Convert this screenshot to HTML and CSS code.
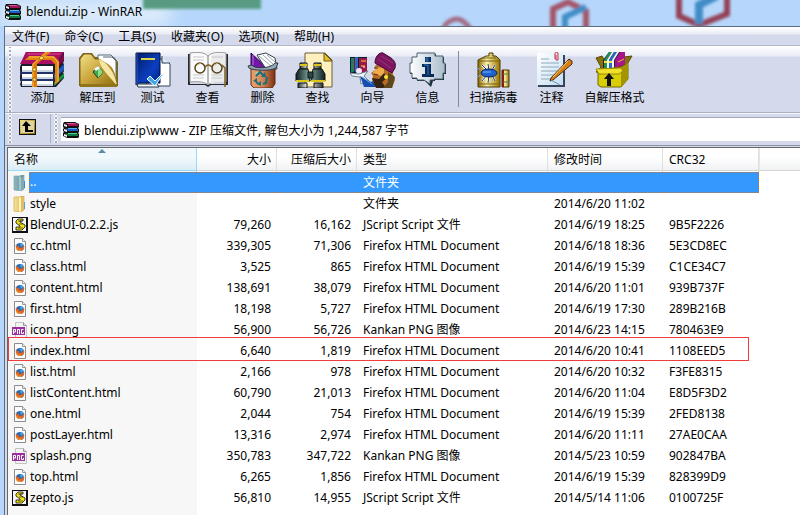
FILE: index.html
```html
<!DOCTYPE html>
<html lang="zh-CN">
<head>
<meta charset="utf-8">
<title>blendui.zip - WinRAR</title>
<link rel="stylesheet" href="styles.css">
</head>
<body>
<svg class="defs" aria-hidden="true">
  <defs>
    <linearGradient id="gold" x1="0" y1="0" x2="1" y2="1"><stop offset="0" stop-color="#f3e08a"/><stop offset=".5" stop-color="#c9a53a"/><stop offset="1" stop-color="#8a6a10"/></linearGradient>
    <linearGradient id="barrel"><stop offset="0" stop-color="#8a6400"/><stop offset=".4" stop-color="#fff3a8"/><stop offset="1" stop-color="#9a7200"/></linearGradient>
    <linearGradient id="navy" x1="0" y1="0" x2="1" y2="1"><stop offset="0" stop-color="#001a66"/><stop offset=".6" stop-color="#0b3fc0"/><stop offset="1" stop-color="#001f80"/></linearGradient>
    <linearGradient id="bin"><stop offset="0" stop-color="#e8a06c"/><stop offset=".45" stop-color="#d98a5c"/><stop offset="1" stop-color="#7c3010"/></linearGradient>
    <linearGradient id="tube"><stop offset="0" stop-color="#101c1c"/><stop offset=".45" stop-color="#7fa3a0"/><stop offset="1" stop-color="#122"/></linearGradient>
    <linearGradient id="steel"><stop offset="0" stop-color="#333"/><stop offset=".4" stop-color="#fff"/><stop offset="1" stop-color="#333"/></linearGradient>
    <linearGradient id="bubble"><stop offset="0" stop-color="#fff"/><stop offset="1" stop-color="#a9bccb"/></linearGradient>
    <linearGradient id="sheet" x1="0" y1="0" x2="1" y2="1"><stop offset="0" stop-color="#fff"/><stop offset="1" stop-color="#c4def5"/></linearGradient>
    <linearGradient id="folder"><stop offset="0" stop-color="#f7e396"/><stop offset="1" stop-color="#dcb350"/></linearGradient>
    <linearGradient id="folderSel"><stop offset="0" stop-color="#8fb5bd"/><stop offset="1" stop-color="#5f93a6"/></linearGradient>
  </defs>
  <symbol id="rar" viewBox="0 0 16 16">
    <path d="M1 0h11l4 2v3l-1 1 1 1v3l-1 1 1 1v3l-1 1H4l-4-2v-3l1-1-1-1V7l1-1-1-1V2z" fill="#111"/>
    <path d="M2 1h9l4 1H5z" fill="#d85a9a"/><path d="M5 2h10v2H5z" fill="#a0145a"/><path d="M1 2l3 1v2L1 4z" fill="#eee"/>
    <path d="M2 6l3 1h10v2H5z" fill="#1d5bc4"/><path d="M5 6h9v1H5z" fill="#59b4ee"/><path d="M1 7l3 1v2L1 9z" fill="#eee"/>
    <path d="M2 11l3 1h10v2H5z" fill="#0b7a43"/><path d="M5 11h9v1H5z" fill="#4fd08c"/><path d="M1 12l3 1v2l-3-1z" fill="#eee"/>
  </symbol>
  <symbol id="dir" viewBox="0 0 16 16">
    <path d="M2 1h6l1-1h3v14l-3 2-7-1z" fill="url(#folder)" stroke="#cfa64a" stroke-width=".7"/><path d="M7 1l2 1v14l-2-1z" fill="#fff3bd"/><path d="M12 6h1v7h-1z" fill="#49a6e8"/><path d="M9 3l3-2v13l-3 2z" fill="#e3be60"/>
  </symbol>
  <symbol id="up" viewBox="0 0 16 16">
    <path d="M2 1h6l1-1h3v14l-3 2-7-1z" fill="url(#folderSel)" stroke="#7ba6b3" stroke-width=".7"/><path d="M7 1l2 1v14l-2-1z" fill="#a5c6c6"/><path d="M12 6h1v7h-1z" fill="#2f8de0"/><path d="M9 3l3-2v13l-3 2z" fill="#82aab2"/>
  </symbol>
  <symbol id="js" viewBox="0 0 16 16">
    <path d="M0 0h16v16H0z" fill="#111"/><path d="M1 1h13v13H1z" fill="#f5f5f5"/>
    <path d="M11 4V2H6L4 4v2l4 3v1H4v3h6l3-3V8L8 5V4z" fill="#f2e21a" stroke="#111" stroke-width=".8"/><path d="M6 4h4M7 7h4M6 11h5" stroke="#111" stroke-width=".6" fill="none"/>
  </symbol>
  <symbol id="html" viewBox="0 0 16 16">
    <path d="M2.500.5h8l3 3v12h-11z" fill="#fdfdfd" stroke="#8c8c8c"/><path d="M10.500.5v3h3" fill="#eee" stroke="#999"/>
    <circle cx="8" cy="9" r="4" fill="#2868b8"/><path d="M4 6c-1 4 1 7 4 7 3 0 5-3 4-6-1 2-2 3-4 3-1 0-2-1-1-2H5z" fill="#e8641b"/><path d="M8 6l2-1 1 2-2 2z" fill="#3fa9e8"/><path d="M4 10c1 2 3 3 5 2" stroke="#f9a832" fill="none"/>
  </symbol>
  <symbol id="png" viewBox="0 0 16 16">
    <path d="M3.500.5h8l3 3v12h-11z" fill="#f3f3f3" stroke="#c2c2c2"/><path d="M11.500.5v3h3" fill="#ddd" stroke="#999"/>
    <path d="M0 5h13v8H0z" fill="#9b2f9e"/><path d="M1.500 12V7.500h2V10h-2M5.500 12V7.500h2V12M11.500 7.500h-2v4h2V10" stroke="#fff" fill="none"/>
  </symbol>
</svg>

<div class="window">
  <header class="titlebar">
    <svg class="glass" width="800" height="26" aria-hidden="true">
      <defs><filter id="soft" x="-20%" y="-50%" width="140%" height="200%"><feGaussianBlur stdDeviation="1.500"/></filter><filter id="glow"><feGaussianBlur stdDeviation="8"/></filter></defs>
      <path d="M0 0h170v26H0z" fill="#dcebfa" filter="url(#glow)"/>
      <g filter="url(#soft)" fill="none">
        <path d="M143-5h118V9H143z" fill="#569b82"/>
        <path d="M443 30c2-8 10-11 14-11s10 4 14 11" stroke="#a26a83" stroke-width="5"/>
        <path d="M553 30V9l15-7 18 9v18" stroke="#a35468" stroke-width="6"/><path d="M565 30V17l21-10" stroke="#3f8dc6" stroke-width="6"/>
        <path d="M679-2v18l20 9 28-11V-4" stroke="#923f54" stroke-width="6"/><path d="M699 24V5l18-9" stroke="#3f8dc6" stroke-width="8"/>
      </g>
    </svg>
    <svg class="icon16"><use href="#rar"/></svg>
    <h1>blendui.zip - WinRAR</h1>
  </header>

  <div class="frame">
    <nav class="menu">
      <button>文件(F)</button><button>命令(C)</button><button>工具(S)</button><button>收藏夹(O)</button><button>选项(N)</button><button>帮助(H)</button>
    </nav>

    <div class="toolbar" role="toolbar">
      <span class="grip"></span>
      <button class="tool"><svg viewBox="0 0 47 36">
        <path d="M7 0h38v9l-1 2 1 1v7l-1 2 1 1v4l-8 9H2l-1-3 1-2-1-2v-5l1-2-1-2v-4H1z" fill="#1c1c2c"/>
        <path d="M7 0h38l-8 12H1z" fill="#a80f62"/><path d="M9 1h33l-1 2H8z" fill="#c22d77"/><path d="M37 13l8-11v6l-8 10z" fill="#8a064b"/>
        <path d="M3 14h31v5H3z" fill="#fff"/><path d="M3 18h31v2H3z" fill="#c9d4e2"/><path d="M35 22l10-10v6l-10 9z" fill="#1d5cc4"/><path d="M3 22h31v5H3z" fill="#fff"/><path d="M3 25h31v2H3z" fill="#c9d4e2"/><path d="M35 30l10-9v4l-10 9z" fill="#149043"/><path d="M3 29h31v5H3z" fill="#fff"/><path d="M3 32h31v2H3z" fill="#c9d4e2"/>
        <path d="M1 20h34v2H1zM1 27h34v2H1z" fill="#22336a"/>
        <path d="M26 0h6L18 12v23h-5V12z" fill="#dc7c0c"/><path d="M28 0L14 12v23" fill="none" stroke="#ffb94a"/>
        <path d="M10 4h25l5 5v20l-4 4V12l-4-4H6z" fill="#e0820e"/><path d="M10 5h24l5 5v20" fill="none" stroke="#ffb94a"/>
        <path d="M20 6l3-2 2 2-3 2zM14 16h3v3h-3zM14 26h3v3h-3z" fill="#ffec70" stroke="#7a4600" stroke-width=".6"/>
      </svg><span>添加</span></button>
      <button class="tool"><svg viewBox="0 0 47 36">
        <path d="M5 6l4-5h9l3 4h19l4 5v24H5z" fill="#806819"/><path d="M24 3h13l4 4v24H24z" fill="#fff" stroke="#54697c"/><path d="M29 5h9l4 4v17" fill="#fff" stroke="#54697c"/>
        <path d="M6 7l4-5h7l4 5h4l10 7 8 20H6z" fill="url(#gold)" stroke="#7a6212"/><path d="M25 7c0 9 9 17 18 27-1-11-3-18-9-22z" fill="#a9851f"/><path d="M25 7c9 4 16 14 18 27-8-11-18-18-18-27z" fill="#f4e6a2"/>
        <path d="M6 32h37v3H6z" fill="#91751a"/><path d="M24 14l5 6-5 6-5-6z" fill="#45a64f" stroke="#153e20"/><path d="M24 14v12l5-6z" fill="#86df83"/><path d="M20 17l4-3 2 2-4 3z" fill="#fff"/>
      </svg><span>解压到</span></button>
      <button class="tool"><svg viewBox="0 0 47 36">
        <path d="M24 7h12l5 5v22H17z" fill="#fff" stroke="#344456"/><path d="M33 4v7h8" fill="#dceafa" stroke="#344456"/><path d="M32 8l4 4" stroke="#67869d"/>
        <path d="M7 1h24v30H10l-3 2z" fill="url(#navy)" stroke="#000d36"/><path d="M8 1v32" stroke="#2b61ca"/><path d="M12 7h14" stroke="#d8d646" stroke-width="2"/>
        <path d="M8 32h20l2 3H9z" fill="#f5f8ff" stroke="#234"/><path d="M18 27l8 7 11-16-11 11-5-5z" fill="#3ca8eb" stroke="#fff"/>
      </svg><span>测试</span></button>
      <button class="tool"><svg viewBox="0 0 47 36">
        <path d="M4 2h2v30h36V2h2v31H27l-3 2-3-2H4z" fill="#27292c"/><path d="M6 1c8-1 14-1 18 3 4-4 10-4 18-3v29c-9-1-15 0-18 3-3-3-9-4-18-3z" fill="#fafafa" stroke="#979797"/>
        <path d="M24 4v28" stroke="#777"/><path d="M27 4c5-3 9-2 14-2v28c-6 0-11 0-14 2z" fill="#ebebeb"/><path d="M9 5h11M9 8h11M9 23h11M9 26h11M28 5h11M28 23h10M28 26h10" stroke="#c5c9cb"/>
        <g fill="none" stroke="#55431b"><circle cx="16" cy="16" r="5" stroke-width="1.500"/><circle cx="33" cy="16" r="5" stroke-width="1.500"/></g><path d="M21 15q3-4 7 0M38 13l3 3v19" fill="none" stroke="#7d6020" stroke-width="1.500"/><path d="M13 13l4-2M30 13l4-2" stroke="#cfb76a"/>
      </svg><span>查看</span></button>
      <button class="tool"><svg viewBox="0 0 47 36">
        <path d="M12 1v15h16z" fill="#7117a6" stroke="#260047"/><path d="M14 3v10" stroke="#c56cf1"/><path d="M18 3l9-2 9 5 2 11H27z" fill="#fff" stroke="#39414a"/><path d="M20 4l12 10M24 3l11 10M28 3l8 7" stroke="#9aa3ab"/>
        <path d="M12 16h24v16l-3 4H15l-3-3z" fill="url(#bin)" stroke="#632b14"/><path d="M9 14l4-1c1 4 19 4 23-2h3l-2 5c-4 3-22 3-27 0z" fill="#94a6b6" stroke="#2d3b48"/>
        <g fill="none" stroke="#13717e" stroke-width="2"><path d="M17 24l4-4 3 3M28 25l-1 6-3 1M19 32l-3-4"/></g><path d="M22 25h5l-1-5zM22 29v5l-4-2zM14 29l4-3v4z" fill="#13717e"/><path d="M16 22l3-2" stroke="#a6ddda"/>
      </svg><span>删除</span></button>
      <button class="tool"><svg viewBox="0 0 47 36">
        <path d="M11 1h20l7 7v27H11z" fill="#fff0bd" stroke="#695c38"/><path d="M30 1v8h8z" fill="#e3bf2f" stroke="#725913"/>
        <g stroke="#0b1414"><path d="M6 11h7v6H6zM20 11h7v6h-7z" fill="url(#steel)"/><path d="M5 17h9l2 12H2V22zM19 17h9l3 5v7H17z" fill="url(#tube)"/><path d="M14 20h5v6h-5z" fill="#304747"/><path d="M4 31h9v5H4zM20 31h9v5h-9z" fill="url(#steel)"/></g><path d="M2 29h13M17 29h14M6 13h7M20 13h7" stroke="#dbc619" stroke-width="2"/>
      </svg><span>查找</span></button>
      <button class="tool"><svg class="wide" viewBox="0 0 48 36">
        <path d="M1 5h17v16H1z" fill="#071f2d"/><path d="M2 6h3v14H2z" fill="#078b62"/><path d="M6 5h3v15H6z" fill="#2769c4"/><path d="M10 6h8v14h-8z" fill="#9d174b"/><path d="M12 9h5M12 14h4" stroke="#f8d82f"/><path d="M5 6v13" stroke="#d43030"/><circle cx="10" cy="19" r="3" fill="#f4e7fb"/>
        <path d="M1 21l9 1 9-3-4 5 5 5-8 3-1-7-8-1z" fill="#eff5f8" stroke="#6f8392"/><path d="M11 24l11 6 5-3 6 8H15z" fill="#174dad"/><path d="M13 25l10 7" stroke="#62a0ed"/>
        <path d="M26 14l3-3 13 5 4 12-3 8H28l-5-8 1-4-2-3 4-3z" fill="#b86b28"/><path d="M27 15l8 1v8l-8-1-3-2z" fill="#efaa4c"/><path d="M23 26l7 1 5-6 3 5-5 4 4 6H27z" fill="#372314"/><path d="M39 20l7 5-3 11h-9l5-6z" fill="#5b481d"/>
        <path d="M26 11c0-6 4-11 8-10l8 5c4 3 5 6 4 10l-3 5z" fill="#7c165f" stroke="#420638"/><path d="M29 7l13 9M32 4l12 7" stroke="#9b3180" fill="none"/><circle cx="37" cy="25" r="2" fill="#f5e735"/><path d="M25 16h4M25 22l4 1" stroke="#4d260e"/>
        <path d="M12 1h1M17 0h1M20 4h1M18 10h1M21 10h1M14 15h2" stroke="#fff"/>
      </svg><span>向导</span></button>
      <button class="tool"><svg viewBox="0 0 47 36">
        <path d="M14 2h18v3h8v7h2v10h-2v6h-9v1h-2l-2 6-6-6h-8v-2H8V22H6V11h2V5h6z" fill="#152b32"/>
        <path d="M13 1h18v3h8v7h2v10h-2v6h-9v1h-4v4l-6-4h-7v-2H8V21H6V11h2V5h5z" fill="url(#bubble)" stroke="#48616d"/><path d="M21 5h6v5h-6zM18 12h9v10h3v3H18v-3h3v-7h-3z" fill="#092b59"/><path d="M22 6h2v3h-2zM20 13h4v10" fill="none" stroke="#307ac4"/>
      </svg><span>信息</span></button>
      <span class="divider"></span>
      <button class="tool scan"><svg viewBox="0 0 47 36">
        <path d="M16 4h3V1h4v3h3l4 4v27H8V8z" fill="url(#barrel)" stroke="#493b06"/><path d="M9 9h20M9 32h20M12 6h14" stroke="#776210"/><path d="M32 18h7v17h-7z" fill="url(#barrel)" stroke="#4a3905"/><path d="M33 18v17" stroke="#8b1710" stroke-width="2"/><path d="M33 22h6M33 30h6" stroke="#4d7e3c"/>
        <g stroke="#fff" stroke-width="2" fill="none"><path d="M12 13l5 5M18 12l1 6M25 13l-3 5M12 29l5-6M18 31l1-8M25 29l-3-6"/></g><g stroke="#112f63" fill="none"><path d="M12 13l5 5M18 12l1 6M25 13l-3 5M12 29l5-6M18 31l1-8M25 29l-3-6"/></g><ellipse cx="19" cy="21" rx="8" ry="4" fill="#2163cf" stroke="#071f62"/><path d="M13 20h8M10 18l-2-2M10 23l-2 2" stroke="#72b5ff"/>
      </svg><span>扫描病毒</span></button>
      <button class="tool"><svg viewBox="0 0 47 36">
        <path d="M10 3h27v32H10z" fill="#36465a"/><path d="M9 1h26v32H9z" fill="url(#sheet)"/><path d="M13 7h8M13 11h18M13 15h18M13 19h18M13 23h17M13 27h11" stroke="#8fa8ba"/>
        <path d="M27 7V2q0-3 3-1v7h-2V3" fill="none" stroke="#c92d3c"/><path d="M41 7l3 2v3L25 28l-3 1 1-3z" fill="#d77f17" stroke="#4d2a0c"/><path d="M40 9l-15 16" stroke="#ffd06c"/><path d="M23 28l9 5" stroke="#71979d"/>
      </svg><span>注释</span></button>
      <button class="tool sfx"><svg viewBox="0 0 47 36">
        <path d="M5 6l6-2 5 10 17-9 8-1-6 10 2 4-14 4-18-2 5-5z" fill="#83720a" stroke="#5b4d00"/>
        <path d="M18 0h16v12l-7 4H12V8z" fill="#2a1a3a"/><path d="M18 0h3l-5 8v8h-3V8z" fill="#21904b"/><path d="M21 0h2l-5 8v8h-2V8z" fill="#fff"/><path d="M23 0h3l-5 8v8h-3V8z" fill="#236ccc"/><path d="M26 0h2l-5 8v8h-2V8z" fill="#f7f7fa"/><path d="M29 0h5v12l-7 4h-3V8z" fill="#a61589"/><path d="M13 10h3M18 10h3" stroke="#f8e53a" stroke-width="2"/><path d="M27 10l6-3" stroke="#f8b63c"/>
        <path d="M7 18l24-3 6-4v16l-7 8H10l-3-2z" fill="#d9cd04" stroke="#746700"/><path d="M30 16l7-5v16l-7 8z" fill="#a49402"/><path d="M5 17l25-1 2 3-4 3H8z" fill="#efe02e" stroke="#9b8b08"/><path d="M18 21l5 6h-3v7h-4v-7h-3z" fill="#111"/>
      </svg><span>自解压格式</span></button>
    </div>

    <div class="address">
      <span class="grip"></span>
      <button class="parent" aria-label="上一级"><svg viewBox="0 0 17 16">
        <path d="M0 0h17v16H0z" fill="#111"/><path d="M1 1h15v14H1z" fill="url(#gold)"/><path d="M2 2h13v12H2z" fill="#ddd79d"/><path d="M7 2l5 5H9v4h5v2H6V7H3z" fill="#000"/>
      </svg></button>
      <span class="grip second"></span>
      <div class="field"><svg class="icon16"><use href="#rar"/></svg><input type="text" aria-label="地址" value="blendui.zip\www - ZIP 压缩文件, 解包大小为 1,244,587 字节"></div>
    </div>

    <main class="list">
      <table>
        <colgroup><col class="c-name"><col class="c-size"><col class="c-packed"><col class="c-type"><col class="c-date"><col class="c-crc"><col></colgroup>
        <thead><tr><th class="sorted">名称</th><th class="num">大小</th><th class="num">压缩后大小</th><th>类型</th><th>修改时间</th><th>CRC32</th><th class="blank"></th></tr></thead>
        <tbody>
          <tr class="selected"><td><div class="name"><svg class="icon16"><use href="#up"/></svg><span>..</span></div></td><td></td><td></td><td>文件夹</td><td></td><td></td><td></td></tr>
          <tr><td><div class="name"><svg class="icon16"><use href="#dir"/></svg><span>style</span></div></td><td></td><td></td><td>文件夹</td><td>2014/6/20 11:02</td><td></td><td></td></tr>
          <tr><td><div class="name"><svg class="icon16"><use href="#js"/></svg><span>BlendUI-0.2.2.js</span></div></td><td class="num">79,260</td><td class="num">16,162</td><td>JScript Script 文件</td><td>2014/6/19 18:25</td><td>9B5F2226</td><td></td></tr>
          <tr><td><div class="name"><svg class="icon16"><use href="#html"/></svg><span>cc.html</span></div></td><td class="num">339,305</td><td class="num">71,306</td><td>Firefox HTML Document</td><td>2014/6/18 18:36</td><td>5E3CD8EC</td><td></td></tr>
          <tr><td><div class="name"><svg class="icon16"><use href="#html"/></svg><span>class.html</span></div></td><td class="num">3,525</td><td class="num">865</td><td>Firefox HTML Document</td><td>2014/6/19 15:39</td><td>C1CE34C7</td><td></td></tr>
          <tr><td><div class="name"><svg class="icon16"><use href="#html"/></svg><span>content.html</span></div></td><td class="num">138,691</td><td class="num">38,079</td><td>Firefox HTML Document</td><td>2014/6/20 11:01</td><td>939B737F</td><td></td></tr>
          <tr><td><div class="name"><svg class="icon16"><use href="#html"/></svg><span>first.html</span></div></td><td class="num">18,198</td><td class="num">5,727</td><td>Firefox HTML Document</td><td>2014/6/19 17:30</td><td>289B216B</td><td></td></tr>
          <tr><td><div class="name"><svg class="icon16"><use href="#png"/></svg><span>icon.png</span></div></td><td class="num">56,900</td><td class="num">56,726</td><td>Kankan PNG 图像</td><td>2014/6/23 14:15</td><td>780463E9</td><td></td></tr>
          <tr class="marked"><td><div class="name"><svg class="icon16"><use href="#html"/></svg><span>index.html</span></div></td><td class="num">6,640</td><td class="num">1,819</td><td>Firefox HTML Document</td><td>2014/6/20 10:41</td><td>1108EED5</td><td></td></tr>
          <tr><td><div class="name"><svg class="icon16"><use href="#html"/></svg><span>list.html</span></div></td><td class="num">2,166</td><td class="num">978</td><td>Firefox HTML Document</td><td>2014/6/20 10:32</td><td>F3FE8315</td><td></td></tr>
          <tr><td><div class="name"><svg class="icon16"><use href="#html"/></svg><span>listContent.html</span></div></td><td class="num">60,790</td><td class="num">21,013</td><td>Firefox HTML Document</td><td>2014/6/20 11:04</td><td>E8D5F3D2</td><td></td></tr>
          <tr><td><div class="name"><svg class="icon16"><use href="#html"/></svg><span>one.html</span></div></td><td class="num">2,044</td><td class="num">754</td><td>Firefox HTML Document</td><td>2014/6/19 15:39</td><td>2FED8138</td><td></td></tr>
          <tr><td><div class="name"><svg class="icon16"><use href="#html"/></svg><span>postLayer.html</span></div></td><td class="num">13,316</td><td class="num">2,974</td><td>Firefox HTML Document</td><td>2014/6/20 11:11</td><td>27AE0CAA</td><td></td></tr>
          <tr><td><div class="name"><svg class="icon16"><use href="#png"/></svg><span>splash.png</span></div></td><td class="num">350,783</td><td class="num">347,722</td><td>Kankan PNG 图像</td><td>2014/5/23 10:59</td><td>902847BA</td><td></td></tr>
          <tr><td><div class="name"><svg class="icon16"><use href="#html"/></svg><span>top.html</span></div></td><td class="num">6,265</td><td class="num">1,856</td><td>Firefox HTML Document</td><td>2014/6/19 15:39</td><td>828399D9</td><td></td></tr>
          <tr><td><div class="name"><svg class="icon16"><use href="#js"/></svg><span>zepto.js</span></div></td><td class="num">56,810</td><td class="num">14,955</td><td>JScript Script 文件</td><td>2014/5/14 11:06</td><td>0100725F</td><td></td></tr>
        </tbody>
      </table>
    </main>
  </div>
</div>
</body>
</html>
```
FILE: styles.css
```css
*, *::after { box-sizing: border-box; }
body { margin: 0; }
body, button, input {
  font-family: "Noto Sans", "Noto Sans CJK SC", sans-serif;
  font-size: 12px;
  line-height: 18px;
  color: #000;
}
button { border: 0; padding: 0; background: none; }
.defs { position: absolute; width: 0; height: 0; }
.icon16 { width: 16px; height: 16px; flex: none; display: block; }

.window { min-height: 100vh; display: flex; flex-direction: column; background: #b6d7fb; overflow: hidden; }
.titlebar { position: relative; display: flex; align-items: center; gap: 5px; height: 26px; padding: 0 5px 2px; overflow: hidden; }
.titlebar > * { position: relative; }
.titlebar .glass { position: absolute; left: 0; top: 0; }
.titlebar h1 { margin: 0; font-size: 12px; font-weight: 400; }

.frame { flex: 1; display: flex; flex-direction: column; margin-left: 4px; border: solid #5d6b80; border-width: 1px 0 0 1px; background: #d4daec; }

.menu { display: flex; gap: 15px; height: 19px; padding-left: 7px; background: linear-gradient(#fff, #e9ecf6 7px, #d4daec 8px); border-bottom: 1px solid #b3b9cb; }
.menu button { line-height: 20px; }

.toolbar { display: flex; align-items: stretch; height: 67px; border-top: 1px solid #fff; border-bottom: 1px solid #a9b0c4; background: linear-gradient(#fff, #e9ecf6 9px, #d4daec 10px); }
.grip { width: 10px; flex: none; background: radial-gradient(circle at 5px 2px, #a3a9bb 1px, #f8f9fd 1px, #f8f9fd 2px, transparent 2px) 0 2px / 10px 4px repeat-y; }
.tool { width: 55px; flex: none; display: flex; flex-direction: column; align-items: center; gap: 1px; padding-top: 5px; white-space: nowrap; }
.tool svg { width: 47px; height: 36px; flex: none; display: block; }
.tool svg.wide { width: 48px; }
.tool.scan { width: 61px; }
.tool.sfx { width: 71px; }
.divider { width: 1px; margin: 4px 4px 5px 3px; background: #858b9c; }

.address { display: flex; height: 33px; padding-bottom: 2px; border-top: 1px solid #f5f7fc; border-bottom: 1px solid #8b92a4; }
.parent { display: flex; align-items: center; width: 36px; padding: 0 0 4px 4px; border-right: 1px solid #a9b0c4; }
.parent svg { width: 17px; height: 16px; display: block; }
.field { flex: 1; display: flex; align-items: center; gap: 5px; margin-top: 3px; margin-bottom: 2px; padding-left: 2px; background: #fff; border-top: 1px solid #a3a9b8; }
.field input { flex: 1; min-width: 0; height: 20px; border: 0; padding: 0; background: none; outline: none; }

.list { flex: 1; margin-top: 1px; border: solid #686868; border-width: 1px 0 0 1px; margin-left: 2px; background: linear-gradient(90deg, #f7f7f7 189px, #fff 189px); }
table { width: 100%; table-layout: fixed; border-collapse: separate; border-spacing: 0; }
.c-name { width: 189px; }
.c-size { width: 80px; }
.c-packed { width: 80px; }
.c-type { width: 191px; }
.c-date { width: 115px; }
.c-crc { width: 96px; }
th, td { padding: 0 6px; text-align: left; font-weight: 400; white-space: nowrap; }
th { height: 24px; border-right: 1px solid #dfdfdf; background: linear-gradient(#fff 9px, #f1f2f4 22px, #d5d5d5 22px, #d5d5d5 23px, #fff 23px); }
th.sorted { position: relative; border-right-color: #96d9f9; background: linear-gradient(#f2f9fc 9px, #daedf5 22px, #96d9f9 22px, #96d9f9 23px, #f7f7f7 23px); }
th.sorted::after { content: ""; position: absolute; left: 50%; top: 1px; margin-left: -4px; border: solid transparent; border-width: 0 4px 4px; border-bottom-color: #5a8ca8; }
th.blank { border-right: 0; border-left: 1px solid #e6e6e6; }
.num { text-align: right; }
th.num { padding-right: 5px; }
td { height: 21px; }
td:first-child { padding: 0 0 0 4px; }
.name { display: flex; align-items: center; gap: 2px; height: 21px; }
.selected td { color: #fff; background: #3399ff; border: dotted #c87432; border-width: 1px 0; line-height: 17px; }
.selected td:first-child { background: none; border: 0; }
.selected .name span { flex: 1; height: 21px; margin-left: -1px; background: #3399ff; border: 1px dotted #c87432; border-right: 0; }
.selected td:nth-child(6) { border-right-width: 1px; }
.selected td:last-child { background: none; border: 0; }
.marked { position: relative; }
.marked td:first-child::after { content: ""; position: absolute; left: 0; top: -3px; width: 741px; height: 24px; border: 1px solid #f03c3c; }
```
